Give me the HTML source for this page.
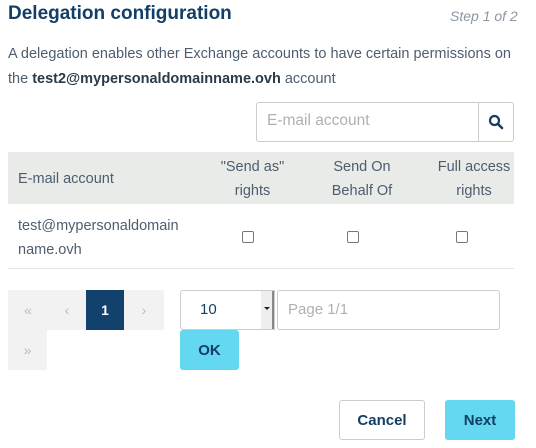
<!DOCTYPE html>
<html><head><style>
body{margin:0;width:536px;height:448px;background:#fff;font-family:"Liberation Sans",sans-serif;position:relative;overflow:hidden;color:#4d5d6e}
.a{position:absolute}
h1{position:absolute;left:8px;top:3px;margin:0;font-size:19px;font-weight:bold;color:#133e66}
.step{left:450px;top:8px;font-size:14px;font-style:italic;color:#8a96a2}
.p{left:8px;top:42px;font-size:14.5px;line-height:25px;width:515px}
.btn{position:absolute;display:flex;align-items:center;justify-content:center;font-size:15px;font-weight:bold;color:#133e66;border-radius:3px;box-sizing:border-box}
.pg{position:absolute;background:#f2f2f2;color:#bbb;display:flex;align-items:center;justify-content:center;font-size:14px}
.th{font-size:14.5px;line-height:24px}
</style></head><body>
<h1>Delegation configuration</h1>
<div class="a step">Step 1 of 2</div>
<div class="a p">A delegation enables other Exchange accounts to have certain permissions on the <b style="color:#2b3a48">test2@mypersonaldomainname.ovh</b> account</div>
<div class="a" style="left:256px;top:102px;width:258px;height:40px;border:1px solid #ccc;border-radius:3px;box-sizing:border-box"></div>
<div class="a" style="left:267px;top:112px;font-size:15.5px;color:#b0b0b0">E-mail account</div>
<div class="a" style="left:478px;top:103px;width:1px;height:38px;background:#ccc"></div>
<svg class="a" style="left:488px;top:114px" width="16" height="16" viewBox="0 0 16 16"><circle cx="6.5" cy="6.5" r="4.5" fill="none" stroke="#133e66" stroke-width="2.2"/><path d="M10 10l4 4" stroke="#133e66" stroke-width="2.6" stroke-linecap="round"/></svg>
<div class="a" style="left:8px;top:152px;width:506px;height:52px;background:#e8ebe8"></div>
<div class="a th" style="left:18px;top:167px">E-mail account</div>
<div class="a th" style="left:200px;top:155px;width:105px;text-align:center">"Send as"<br>rights</div>
<div class="a th" style="left:307px;top:155px;width:110px;text-align:center">Send On<br>Behalf Of</div>
<div class="a th" style="left:420px;top:155px;width:108px;text-align:center">Full access<br>rights</div>
<div class="a th" style="left:18px;top:214px">test@mypersonaldomain<br>name.ovh</div>
<div class="a" style="left:242px;top:231px;width:10px;height:10px;border:1px solid #777;border-radius:2px"></div>
<div class="a" style="left:347px;top:231px;width:10px;height:10px;border:1px solid #777;border-radius:2px"></div>
<div class="a" style="left:456px;top:231px;width:10px;height:10px;border:1px solid #777;border-radius:2px"></div>
<div class="a" style="left:8px;top:268px;width:506px;height:1px;background:#e5e5e5"></div>
<div class="pg" style="left:8px;top:290px;width:156px;height:40px"></div>
<div class="pg" style="left:8px;top:290px;width:40px;height:40px">«</div>
<div class="pg" style="left:48px;top:290px;width:38px;height:40px">‹</div>
<div class="pg" style="left:86px;top:290px;width:38px;height:40px;background:#11416c;color:#fff;font-weight:bold">1</div>
<div class="pg" style="left:124px;top:290px;width:40px;height:40px">›</div>
<div class="pg" style="left:8px;top:330px;width:39px;height:40px">»</div>
<div class="a" style="left:180px;top:290px;width:95px;height:40px;border:1px solid #ccc;border-radius:3px 0 0 3px;box-sizing:border-box"></div>
<div class="a" style="left:200px;top:301px;font-size:15px;color:#133e66">10</div>
<div class="a" style="left:261px;top:291px;width:13px;height:38px;background:#eee;border-right:2px solid #888;box-sizing:border-box"></div>
<div class="a" style="left:264px;top:307px;width:0;height:0;border-left:3px solid transparent;border-right:3px solid transparent;border-top:3px solid #222"></div>
<div class="a" style="left:277px;top:290px;width:223px;height:40px;border:1px solid #ccc;border-radius:3px;box-sizing:border-box"></div>
<div class="a" style="left:288px;top:301px;font-size:15px;color:#b0b0b0">Page 1/1</div>
<div class="btn" style="left:180px;top:330px;width:59px;height:40px;background:#63d8f0">OK</div>
<div class="btn" style="left:339px;top:400px;width:86px;height:40px;border:1px solid #ccc;background:#fff">Cancel</div>
<div class="btn" style="left:445px;top:400px;width:70px;height:40px;background:#63d8f0">Next</div>
</body></html>
